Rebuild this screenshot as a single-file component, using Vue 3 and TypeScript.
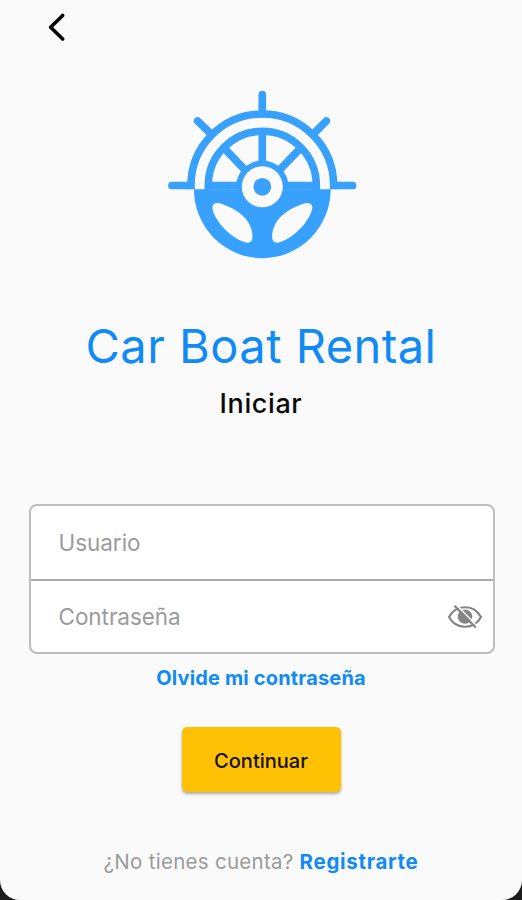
<script setup lang="ts">
import { ref } from 'vue'

const username = ref('')
const password = ref('')
const showPassword = ref(false)
</script>

<template>
  <div class="device">
    <main class="screen">
      <header class="topbar">
        <button class="back" type="button" aria-label="Volver">
          <svg width="24" height="32" viewBox="0 0 24 32" fill="none">
            <path d="M16.700 4.500 4.600 16.200 16.700 28" stroke="#000" stroke-width="3.600" stroke-linecap="round" stroke-linejoin="round" />
          </svg>
        </button>
      </header>

      <svg class="logo" width="204" height="190" viewBox="0 0 204 190" fill="none">
        <g stroke="#38a1fd" stroke-width="7.700" stroke-linecap="round">
          <path d="M102.300 14.500V34M37.700 41 50 53M166.300 41 154.300 53M12 105.500H29M192.600 105.500H175.600" />
        </g>
        <g stroke="#38a1fd" stroke-width="7.600">
          <path d="M31 109.300V105.300A71.300 71.300 0 0 1 173.600 105.300V109.300" />
          <path d="M48.300 110V105.300A54 54 0 0 1 156.300 105.300V110" />
          <path d="M102.300 50V84M63 67 87 92M141.600 67 117.600 92M46 105.600H158.600" />
        </g>
        <circle cx="102.300" cy="106.800" r="26.300" fill="#38a1fd" />
        <path d="M33.900 109.200H170.700A68.400 69 0 0 1 33.900 109.200Z" fill="#38a1fd" />
        <circle cx="102.300" cy="106.800" r="20.500" fill="#fafafa" />
        <circle cx="102.300" cy="106.800" r="8.900" fill="#38a1fd" />
        <g fill="#fafafa">
          <path id="grip" d="M52.300 127C52.600 123.500 56.500 122.200 60.500 123.500C70 126.500 79.500 131.500 85.500 138.500C90.500 144.500 93 152 92.400 158C92 162.500 88.500 163.300 85 162.200C70.500 158 53 139.500 52.300 127Z" />
          <use href="#grip" transform="matrix(-1 0 0 1 204.600 0)" />
        </g>
      </svg>

      <h1 class="title">Car Boat Rental</h1>
      <h2 class="subtitle">Iniciar</h2>

      <form class="fields" @submit.prevent>
        <label class="field">
          <input v-model="username" class="input" type="text" placeholder="Usuario" />
        </label>
        <label class="field">
          <input v-model="password" class="input" :type="showPassword ? 'text' : 'password'" placeholder="Contraseña" />
          <button class="toggle" type="button" aria-label="Mostrar" @click="showPassword = !showPassword">
            <svg width="36" height="28" viewBox="0 0 36 28" fill="none">
              <path d="M2 14C9 1 27 1 34 14C27 27 9 27 2 14Z" stroke="#858585" stroke-width="2.200" stroke-linejoin="round" />
              <circle cx="18" cy="13.600" r="7.200" fill="#858585" />
              <path d="M9 1.500 30 23" stroke="#fff" stroke-width="1.600" />
              <path d="M7.500 2.700 28.700 24.600" stroke="#858585" stroke-width="2.200" />
            </svg>
          </button>
        </label>
      </form>

      <a class="forgot">Olvide mi contraseña</a>
      <button class="submit" type="button">Continuar</button>
      <p class="signup"><span class="question">¿No tienes cuenta?</span><a class="register">Registrarte</a></p>
    </main>
  </div>
</template>

<style>
body {
  margin: 0;
}
</style>

<style scoped>
.device {
  height: 900px;
  background: #1c1c1c;
  font-family: Inter, "Liberation Sans", sans-serif;
}
.screen {
  box-sizing: border-box;
  height: 900px;
  display: flex;
  flex-direction: column;
  align-items: center;
  background: #fafafa;
  border-radius: 0 0 20px 20px;
}
.topbar {
  box-sizing: border-box;
  width: 100%;
  height: 80px;
  padding: 11px 46px 0;
}
button {
  border: 0;
  padding: 0;
  background: none;
  font-family: inherit;
}
.back,
.toggle {
  display: flex;
}
.logo {
  display: block;
  margin-left: 2px;
}
.title {
  margin: 46px 0 0;
  height: 60px;
  line-height: 60px;
  font-size: 47px;
  font-weight: 400;
  letter-spacing: 0.450px;
  color: #108af5;
  white-space: nowrap;
}
.subtitle {
  margin: 8px 0 0;
  height: 40px;
  line-height: 40px;
  font-size: 27px;
  font-weight: 500;
  letter-spacing: 0.600px;
  color: #0a0a0a;
}
.fields {
  box-sizing: border-box;
  width: 466px;
  height: 150px;
  margin-top: 80px;
  margin-left: 1px;
  border: 2px solid #bdbdbd;
  border-radius: 8px;
  background: #fff;
  display: flex;
  flex-direction: column;
}
.field {
  box-sizing: border-box;
  height: 73px;
  display: flex;
  align-items: center;
  padding: 0 10px 0 28px;
}
.field + .field {
  height: 73px;
  border-top: 2px solid #ababab;
}
.input {
  flex: 1;
  min-width: 0;
  padding: 0;
  border: 0;
  outline: 0;
  background: none;
  font-family: inherit;
  font-size: 22.500px;
  letter-spacing: -0.050px;
}
.input::placeholder {
  color: #9b9b9b;
  opacity: 1;
}
.forgot {
  margin-top: 9px;
  line-height: 30px;
  font-size: 20px;
  font-weight: 700;
  letter-spacing: 0.150px;
  color: #108af5;
}
.submit {
  width: 159px;
  height: 65px;
  margin-top: 34px;
  border-radius: 5px;
  background: #ffc103;
  box-shadow: 0 2px 3px rgba(0, 0, 0, 0.320);
  padding-top: 2px;
  font-size: 20px;
  font-weight: 500;
  letter-spacing: 0;
  color: #111;
}
.signup {
  display: flex;
  margin: 55px 0 0;
  line-height: 30px;
  font-size: 20.500px;
  gap: 6px;
}
.question {
  color: #9b9b9b;
  letter-spacing: 0.280px;
}
.register {
  color: #108af5;
  font-weight: 700;
  letter-spacing: 0.700px;
}
</style>
